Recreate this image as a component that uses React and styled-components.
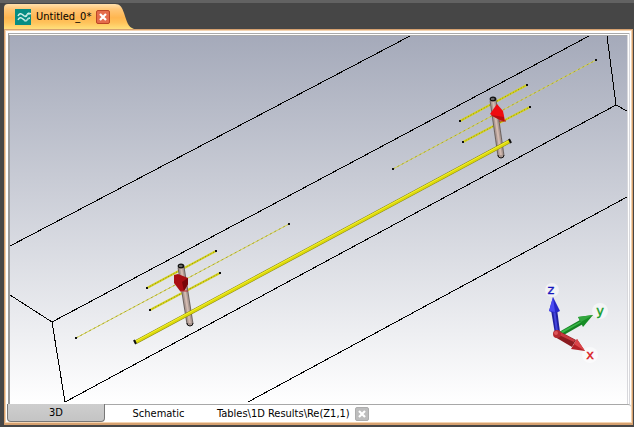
import React from "react";
import styled, { createGlobalStyle } from "styled-components";

const GlobalStyle = createGlobalStyle`
  * { box-sizing: border-box; }
  body { margin: 0; background: #464646; }
  button { font: inherit; color: inherit; border: 0; padding: 0; background: none; cursor: pointer; }
`;

const Window = styled.div`
  min-height: 100vh;
  display: flex;
  flex-direction: column;
  padding: 0 1px 2px 4px;
  background: #464646;
  border-top: 3px solid #626262;
  font: 11px/14px "DejaVu Sans Condensed", "DejaVu Sans", sans-serif;
  color: #000;
`;

const DocumentBar = styled.header`
  display: flex;
  height: 26px;
  padding-top: 1px;
`;

const DocumentTab = styled.div`
  display: flex;
  align-items: center;
  gap: 5px;
  padding-left: 11px;
  border-top-left-radius: 4px;
  background: linear-gradient(#ffe0ad, #ffc778 20%, #ffb650 55%, #ffc35b 75%, #ffe07c);
`;

const DocumentName = styled.button`
  display: flex;
  align-items: center;
  gap: 5px;
  white-space: nowrap;
`;

const TabSlope = styled.svg`
  display: block;
  width: 24px;
  height: 25px;
`;

const CloseButton = styled.button`
  display: grid;
  place-items: center;
  width: 14px;
  height: 14px;
  border-radius: 2px;
  border: 1px solid ${(p) => (p.$muted ? "#adadad" : "#bb4525")};
  background: ${(p) => (p.$muted ? "#bdbdbd" : "#e56c4b")};
  svg { display: block; }
`;

const Frame = styled.main`
  flex: 1;
  display: flex;
  flex-direction: column;
  border: 1px solid #d6a170;
  border-bottom-width: 2px;
  background: #fff;
  box-shadow: inset 0 0 0 1px #f3d3b0;
  padding: 3px 1px 1px 2px;
`;

const Viewport = styled.section`
  flex: 1;
  display: flex;
  min-height: 0;
  margin: 0 1px;
  border: 1px solid #b5b5b5;
  border-left: 2px solid #999;
  border-top: 3px double #aaa;
  border-right: 3px double #d8d8dc;
  border-bottom: 0;
`;

const Scene = styled.svg`
  display: block;
  flex: 1;
  min-width: 0;
  width: 100%;
  background: linear-gradient(#a5aaba, #fff);
`;

const ViewTabs = styled.nav`
  display: flex;
  align-items: stretch;
  height: 18px;
`;

const ViewTab = styled.button`
  width: ${(p) => p.$width || "auto"};
  padding: 1px 0 0;
  white-space: nowrap;
  background: ${(p) => (p.$active ? "linear-gradient(#cecece, #c4c4c4)" : "none")};
  border: ${(p) => (p.$active ? "1px solid #777" : "0")};
  border-top: 0;
  border-radius: 0 0 4px 4px;
`;

const InactiveTabs = styled.div`
  flex: 1;
  display: flex;
  align-items: center;
  gap: 5px;
  border-top: 1px solid #a8a8a8;
  border-top-right-radius: 3px;
`;

const SchematicSlot = styled.div`
  width: 107px;
  display: flex;
  justify-content: center;
`;

function Cross() {
  return (
    <svg width="8" height="8" viewBox="0 0 8 8" aria-hidden="true">
      <path d="M1 1 7 7M7 1 1 7" stroke="#fff" strokeWidth="2.2" />
    </svg>
  );
}

function WaveIcon() {
  return (
    <svg width="16" height="16" viewBox="0 0 16 16" aria-hidden="true">
      <rect width="16" height="16" fill="#078d83" />
      <path d="M3 7q2-4 5-1t4 0 4-1M3 11q2-4 5-1t4 1 3-2" fill="none" stroke="#d4f1ea" strokeWidth="1.5" />
      <path d="M9 8q2-3 6-3M9 12q3 0 5-3" fill="none" stroke="#a5dbd2" />
    </svg>
  );
}

const boxEdges =
  "M10 246 410 36M10 295 52 322 65 402 616 105 607 36M52 322 589 36M616 105 627 111M248 402 627 197";

const wires = [
  [76, 338, 289, 224, 1],
  [393, 169, 596, 60, 1],
  [460, 121, 527, 85, 2],
  [463, 142, 530, 107, 2],
  [147, 288, 216, 251, 2],
  [150, 310, 220, 273, 2],
];

function Wire({ ends: [x1, y1, x2, y2, size] }) {
  const line = { x1, y1, x2, y2 };
  return (
    <g>
      <line {...line} stroke={size === 1 ? "#d6d354" : "#d5d21f"} strokeWidth={size} />
      <line {...line} stroke={size === 1 ? "#a8a630" : "#898b08"} strokeWidth="1" strokeDasharray={size === 1 ? "2 3" : "1 2"} />
      <path d={`M${x1 - 1} ${y1}h2M${x2 - 1} ${y2}h2`} stroke="#111" strokeWidth="2" />
    </g>
  );
}

function Pin({ x1, y1, x2, y2 }) {
  return (
    <g>
      <line x1={x1} y1={y1} x2={x2} y2={y2} stroke="#6c625f" strokeWidth="7" />
      <line x1={x1} y1={y1} x2={x2} y2={y2} stroke="#ad9a94" strokeWidth="5" />
      <line x1={x1} y1={y1} x2={x2} y2={y2} stroke="#d3bab0" strokeWidth="2" />
      <path d={`M${x2 - 3} ${y2 - 1}q0 3 3 3t3-3`} fill="#a99791" stroke="#111" />
      <ellipse cx={x1} cy={y1 - 1} rx="3" ry="2" fill="#333" stroke="#000" />
      <path d={`M${x1 - 2} ${y1 - 1}h3`} stroke="#999" />
    </g>
  );
}

const AxisLabel = styled.text`
  font: 13px "DejaVu Sans", sans-serif;
  text-anchor: middle;
  stroke: currentColor;
  stroke-width: 0.4;
  fill: currentColor;
  color: ${(p) => p.$color};
`;

function Triad() {
  return (
    <g>
      <g fill="#fff" fillOpacity="0.5">
        <circle cx="552" cy="290" r="7" />
        <circle cx="600" cy="311" r="8" />
        <circle cx="590" cy="355" r="8" />
      </g>
      <path d="M559 332 580 320 583 324 562 336Z" fill="#168024" />
      <path d="m560 332 21-11 1 1-21 12Z" fill="#38b647" />
      <path d="M578 317 593 315 583 327Z" fill="#168d25" />
      <path d="M578 317 593 315 581 322Z" fill="#32a63e" />
      <path d="m551 310 6-1 3 23-5 2Z" fill="#2020a0" />
      <path d="m553 310 2-1 3 22-2 1Z" fill="#4545db" />
      <path d="m553 297 7 14q-5 3-11 0Z" fill="#2727c7" />
      <path d="m553 297 2 15-6-1Z" fill="#4a4af1" />
      <path d="m559 331 17 9-4 7-17-10Z" fill="#8b1b20" />
      <path d="m560 332 15 8-1 2-15-7Z" fill="#c83a40" />
      <path d="m577 339 8 12-14-2Z" fill="#b42027" />
      <path d="m577 339 8 12-11-7Z" fill="#db454a" />
      <ellipse cx="557" cy="334" rx="4" ry="4" fill="#b52a30" />
      <circle cx="556" cy="333" r="2" fill="#dc5559" />
      <AxisLabel x="551" y="294" $color="#1717bd">z</AxisLabel>
      <AxisLabel x="600" y="315" $color="#139c28">y</AxisLabel>
      <AxisLabel x="590" y="359" $color="#d91720">x</AxisLabel>
    </g>
  );
}

function Model() {
  return (
    <Scene viewBox="10 36 617 368" preserveAspectRatio="xMidYMid slice" role="img" aria-label="3D model">
      <path d={boxEdges} fill="none" stroke="#000" shapeRendering="crispEdges" />
      {wires.map((ends) => (
        <Wire key={ends.join()} ends={ends} />
      ))}
      <Pin x1={181} y1={267} x2={190} y2={324} />
      <Pin x1={493} y1={100} x2={501} y2={156} />
      <path d="M136 342 510 141" stroke="#85840c" strokeWidth="4" />
      <path d="M136 342 510 141" stroke="#dbd80c" strokeWidth="3" />
      <path d="M136 341 510 140" stroke="#f4f22d" strokeWidth="1" />
      <path d="m134 340 2 4M509 139l2 4" stroke="#111" strokeWidth="2" />
      <path d="m174 275 4-1 10 4v6l-4 7h-4l-6-8Z" fill="#a90e13" />
      <path d="M188 278v6l-4 7-2-9Z" fill="#780609" />
      <path d="M180 291h8" stroke="#b62a2a" />
      <path d="m497 104 6 7 2 10-5-1-10-6Z" fill="#ef0b10" />
      <path d="m491 115 13 2v4l-4-1-8-4Z" fill="#b70b0e" />
      <path d="M499 121h7" stroke="#b30c10" />
      <Triad />
    </Scene>
  );
}

export default function App() {
  return (
    <>
      <GlobalStyle />
      <Window>
        <DocumentBar>
          <DocumentTab>
            <DocumentName>
              <WaveIcon />
              <span>Untitled_0*</span>
            </DocumentName>
            <CloseButton aria-label="Close Untitled_0">
              <Cross />
            </CloseButton>
          </DocumentTab>
          <TabSlope viewBox="0 0 24 25" aria-hidden="true">
            <defs>
              <linearGradient id="tabFill" x2="0" y2="1">
                <stop stopColor="#ffe0ad" />
                <stop offset="0.2" stopColor="#ffc778" />
                <stop offset="0.55" stopColor="#ffb650" />
                <stop offset="0.75" stopColor="#ffc35b" />
                <stop offset="1" stopColor="#ffe07c" />
              </linearGradient>
            </defs>
            <path d="M0 0h5c5 0 7 3 9 9 3 9 4 14 10 16H0Z" fill="url(#tabFill)" />
          </TabSlope>
        </DocumentBar>
        <Frame>
          <Viewport>
            <Model />
          </Viewport>
          <ViewTabs aria-label="Views">
            <ViewTab $active $width="98px">3D</ViewTab>
            <InactiveTabs>
              <SchematicSlot>
                <ViewTab>Schematic</ViewTab>
              </SchematicSlot>
              <ViewTab>Tables\1D Results\Re(Z1,1)</ViewTab>
              <CloseButton $muted aria-label="Close results">
                <Cross />
              </CloseButton>
            </InactiveTabs>
          </ViewTabs>
        </Frame>
      </Window>
    </>
  );
}
